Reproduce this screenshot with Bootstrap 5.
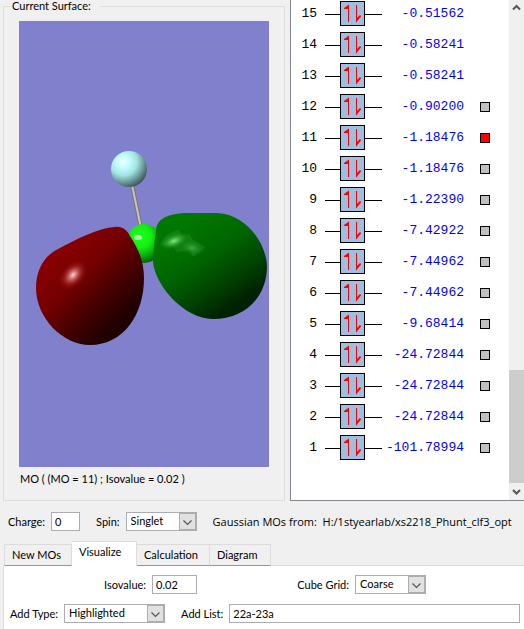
<!DOCTYPE html>
<html lang="en">
<head>
<meta charset="utf-8">
<meta name="viewport" content="width=device-width, initial-scale=1">
<title>MO Editor</title>
<link href="https://cdn.jsdelivr.net/npm/bootstrap@5.3.0/dist/css/bootstrap.min.css" rel="stylesheet">
<style>
  body { background: #f0f0f0; color: #000; font: 11px/16px Lato, "Open Sans", sans-serif; overflow-x: hidden; }
  label { white-space: nowrap; margin-right: 6px; }
  .surface-group { margin: 0 5px 0 3px; border: 1px solid #dcdcdc; padding: 0 15px 13px; }
  .surface-group legend { float: none; width: auto; margin: 0 0 9px -9px; padding: 0 9px 0 2px; font-size: 11px; line-height: 12px; }
  .surface-view { background: #8080cc; }
  .surface-view svg { display: block; width: 100%; height: auto; }
  .surface-note { margin: 4px 0 0 1px; }
  .mo-panel { width: 234px; background: #fff; border-left: 1px solid #828790; border-bottom: 1px solid #828790; }
  .mo-levels { border-collapse: collapse; font: 13px/25px "Liberation Mono", monospace; }
  .mo-levels th, .mo-levels td { padding: 1px 0 5px; font-weight: 400; text-align: right; vertical-align: top; }
  .mo-levels .lvl-no { width: 34px; padding-right: 8px; }
  .mo-levels .lvl-sym { width: 57px; }
  .mo-levels .lvl-energy { width: 82px; color: #00f; }
  .mo-levels .lvl-pick { width: 26px; }
  .lvl-sym svg { display: block; }
  .pick { appearance: none; display: block; width: 10px; height: 10px; margin: 8px 0 0 16px; border: 1px solid #000; background: #c0c0c0; }
  .pick:checked { background: #f00; }
  .vscroll { width: 15px; background: #f0f0f0; }
  .vscroll button { width: 15px; height: 17px; padding: 0; border: 0; background: transparent; display: block; }
  .vscroll .thumb { height: 113px; background: #cdcdcd; }
  .field { height: 19px; min-width: 0; padding: 0 3px; border: 1px solid #abadb3; border-radius: 0; background: #fff; color: #000; }
  .picker { height: 19px; padding: 0 20px 2px 4px; border: 1px solid #abadb3; border-radius: 0; color: #000; line-height: 15px; appearance: none;
    background: #fff url("data:image/svg+xml,%3Csvg xmlns='http://www.w3.org/2000/svg' width='17' height='17'%3E%3Crect x='.5' y='.5' width='16' height='16' fill='%23e1e1e1' stroke='%23adadad'/%3E%3Cpath d='M4.500 7.500l4 4 4-4' fill='none' stroke='%23555' stroke-width='1.200'/%3E%3C/svg%3E") right center no-repeat; }
  .w-charge { width: 29px; } .w-short { width: 71px; } .w-iso { width: 45px; } .w-type { width: 101px; }
  .charge-row { padding: 11px 4px 10px 8px; }
  .source-file { font-family: "Open Sans", "Noto Sans", sans-serif; white-space: nowrap; }
  .mo-tabs { margin-left: 4px; border-bottom: 1px solid #dcdcdc; }
  .mo-tabs button { height: 22px; padding: 0 7px; border: 1px solid #dcdcdc; border-width: 1px 1px 0 0; border-bottom: 1px solid #8c9b98; background: #f0f0f0; color: #000; text-align: left; white-space: nowrap; margin-bottom: -1px; }
  .mo-tabs button:first-child { border-left-width: 1px; }
  .mo-tabs .active { height: 25px; background: #fff; border-bottom-color: #fff; padding-bottom: 3px; }
  .t-68 { width: 68px; } .t-65 { width: 65px; } .t-73 { width: 73px; } .t-61 { width: 61px; }
  .tab-body { margin-left: 3px; padding: 9px 4px 10px 6px; background: #fff; border-left: 1px solid #dcdcdc; }
  .iso-group { padding: 0 94px; margin-bottom: 10px; }
</style>
<script src="https://cdn.jsdelivr.net/npm/bootstrap@5.3.0/dist/js/bootstrap.bundle.min.js"></script>
</head>
<body>
<main>
  <div class="d-flex">
    <div class="flex-grow-1">
      <fieldset class="surface-group">
        <legend>Current Surface:</legend>
        <div class="surface-view">
          <svg viewBox="19 21 250 446" role="img" aria-label="Molecular orbital surface">
            <defs>
              <radialGradient id="fl" cx=".34" cy=".3" r=".75"><stop offset="0" stop-color="#f0ffff"/><stop offset=".25" stop-color="#c0fcfc"/><stop offset=".5" stop-color="#a4e4e4"/><stop offset=".75" stop-color="#6e9c9c"/><stop offset="1" stop-color="#385454"/></radialGradient>
              <radialGradient id="cl" cx=".4" cy=".32" r=".72"><stop offset="0" stop-color="#1eff1e"/><stop offset=".4" stop-color="#14f014"/><stop offset=".7" stop-color="#0cac0c"/><stop offset="1" stop-color="#065806"/></radialGradient>
              <linearGradient id="rd" gradientUnits="userSpaceOnUse" x1="62" y1="250" x2="126" y2="316"><stop offset="0" stop-color="#880000"/><stop offset=".35" stop-color="#740000"/><stop offset=".7" stop-color="#440000"/><stop offset="1" stop-color="#200000"/></linearGradient>
              <linearGradient id="gr" gradientUnits="userSpaceOnUse" x1="184" y1="224" x2="236" y2="304"><stop offset="0" stop-color="#007800"/><stop offset=".4" stop-color="#006600"/><stop offset=".75" stop-color="#004200"/><stop offset="1" stop-color="#002200"/></linearGradient>
              <radialGradient id="rs"><stop offset="0" stop-color="#ffd8d8"/><stop offset=".3" stop-color="#e08080" stop-opacity=".75"/><stop offset=".65" stop-color="#b03030" stop-opacity=".35"/><stop offset="1" stop-color="#900000" stop-opacity="0"/></radialGradient>
              <radialGradient id="gs"><stop offset="0" stop-color="#80f080"/><stop offset=".4" stop-color="#48b848" stop-opacity=".7"/><stop offset="1" stop-color="#007800" stop-opacity="0"/></radialGradient>
            </defs>
            <path d="M132 185L141 228" stroke="#77736e" stroke-width="4"/>
            <path d="M132 185L141 228" stroke="#c8c4bc" stroke-width="2"/>
            <circle cx="129" cy="169" r="18" fill="url(#fl)"/>
            <ellipse cx="144" cy="243.500" rx="18" ry="19.500" fill="url(#cl)"/>
            <ellipse cx="138" cy="237.500" rx="4" ry="2.500" fill="#a8ffa8"/>
            <path d="M115 227C122 226 127 230 130 236C139 250 144 262 144 278C144 314 124 345 90 345C62 345 36 317 36 288C36 270 44 256 58 249C75 240 98 228 115 227Z" fill="url(#rd)"/>
            <ellipse cx="73" cy="275" rx="18" ry="12" fill="url(#rs)" transform="rotate(-48 73 275)"/>
            <path d="M156 230C157 220 165 213 190 213H217C246 214 266 243 267 266C267 298 244 319 213 319C184 319 155 285 153 262C153 250 155 240 156 230Z" fill="url(#gr)"/>
            <path d="M160 245C164 236 169 232 179 230L182 235L190 234L192 239L205 247L202 250L193 257L190 250L177 252L172 246Z" fill="#2a942a" opacity=".35"/>
            <ellipse cx="174" cy="241" rx="16" ry="8" fill="url(#gs)" transform="rotate(-22 174 241)"/>
            <ellipse cx="192" cy="248" rx="14" ry="9" fill="url(#gs)" opacity=".4" transform="rotate(12 192 248)"/>
          </svg>
        </div>
        <div class="surface-note">MO ( (MO = 11) ; Isovalue = 0.02 )</div>
      </fieldset>
    </div>
    <section class="mo-panel d-flex flex-shrink-0" aria-label="Orbital energies">
      <div class="flex-grow-1">
        <table class="mo-levels"><tbody id="levels"></tbody></table>
      </div>
      <div class="vscroll d-flex flex-column">
        <button type="button" aria-label="Scroll up"><svg width="15" height="17" viewBox="0 0 15 17" class="d-block"><path d="M4 9.500L7.500 6L11 9.500" fill="none" stroke="#555" stroke-width="2"/></svg></button>
        <div class="flex-grow-1"></div>
        <div class="thumb"></div>
        <button type="button" aria-label="Scroll down"><svg width="15" height="17" viewBox="0 0 15 17" class="d-block"><path d="M4 7L7.500 10.500L11 7" fill="none" stroke="#555" stroke-width="2"/></svg></button>
      </div>
    </section>
  </div>

  <div class="charge-row d-flex align-items-center">
    <label for="charge">Charge:</label>
    <input id="charge" class="field w-charge flex-shrink-0" value="0">
    <label for="spin" class="ms-3">Spin:</label>
    <select id="spin" class="picker w-short flex-shrink-0"><option>Singlet</option></select>
    <div class="source-file ms-3">Gaussian MOs from:&nbsp; H:/1styearlab/xs2218_Phunt_clf3_opt</div>
  </div>

  <div class="mo-tabs d-flex align-items-end" role="tablist">
    <button type="button" role="tab" class="t-68">New MOs</button>
    <button type="button" role="tab" class="t-65 active" aria-selected="true">Visualize</button>
    <button type="button" role="tab" class="t-73">Calculation</button>
    <button type="button" role="tab" class="t-61">Diagram</button>
  </div>
  <div class="tab-body" role="tabpanel">
    <div class="iso-group d-flex align-items-center">
      <label for="iso">Isovalue:</label>
      <input id="iso" class="field w-iso" value="0.02">
      <label for="grid" class="ms-auto">Cube Grid:</label>
      <select id="grid" class="picker w-short"><option>Coarse</option></select>
    </div>
    <div class="d-flex align-items-center">
      <label for="type">Add Type:</label>
      <select id="type" class="picker w-type"><option>Highlighted</option></select>
      <label for="list" class="ms-3">Add List:</label>
      <input id="list" class="field flex-grow-1" value="22a-23a">
    </div>
  </div>
</main>
<script>
  const levels = [[15,'-0.51562'],[14,'-0.58241'],[13,'-0.58241'],[12,'-0.90200'],[11,'-1.18476'],[10,'-1.18476'],[9,'-1.22390'],[8,'-7.42922'],[7,'-7.44962'],[6,'-7.44962'],[5,'-9.68414'],[4,'-24.72844'],[3,'-24.72844'],[2,'-24.72844'],[1,'-101.78994']];
  const symbol = `<svg width="57" height="25" viewBox="0 0 57 25" aria-hidden="true"><path d="M0 13.500H57" stroke="#000"/><rect x="15.500" y=".5" width="24" height="24" fill="#a0bfe0" stroke="#000"/><path d="M23.500 4V21M31.500 4V21" stroke="#f00"/><path d="M24 3.500V8H22.500L19 8V7ZM31 21.500V16.500H33L34 14.500H36V15.500Z" fill="#f00"/></svg>`;
  document.getElementById('levels').innerHTML = levels.map(([n, e]) =>
    `<tr><th scope="row" class="lvl-no">${n}</th><td class="lvl-sym">${symbol}</td><td class="lvl-energy">${e}</td><td class="lvl-pick">${n < 13 ? `<input type="checkbox" class="pick" aria-label="Select orbital ${n}"${n === 11 ? ' checked' : ''}>` : ''}</td></tr>`).join('');
</script>
</body>
</html>
